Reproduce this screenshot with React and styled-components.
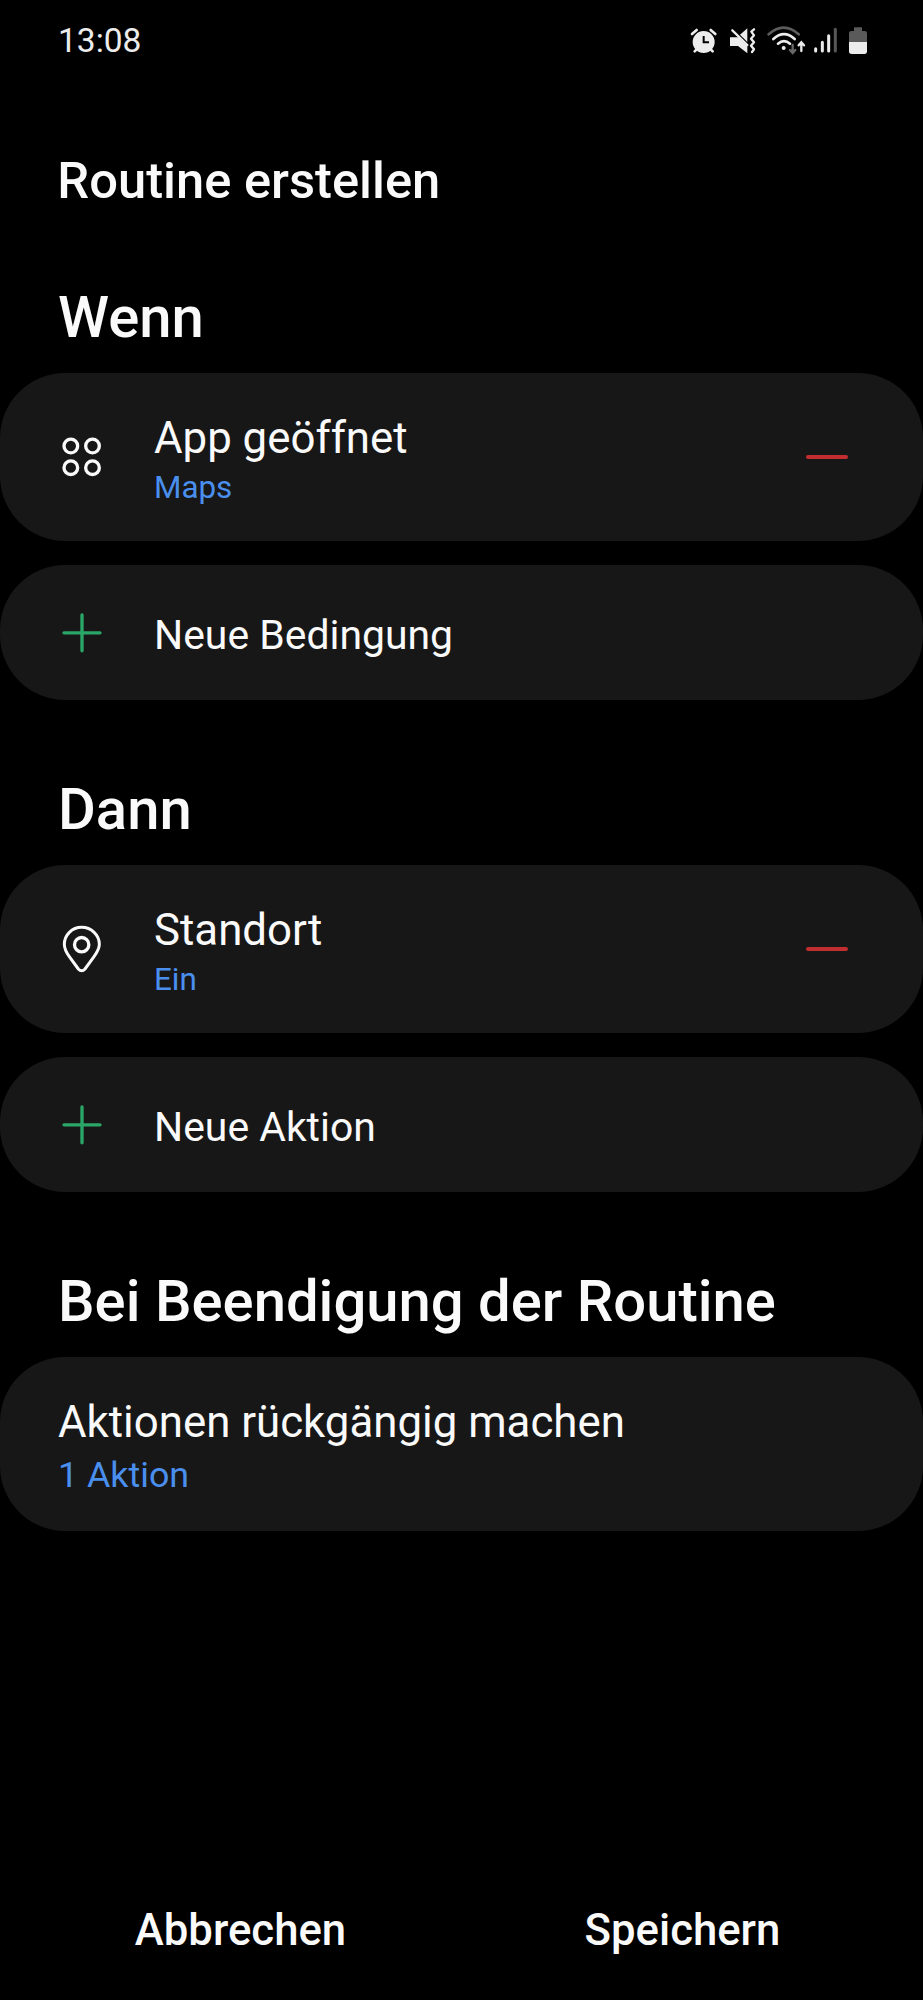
import React from "react";
import styled, { createGlobalStyle } from "styled-components";

const GlobalStyle = createGlobalStyle`
  *, *::before, *::after { box-sizing: border-box; }
  body { margin: 0; background: #000; }
`;

const Screen = styled.main`
  display: flex;
  flex-direction: column;
  width: 923px;
  height: 2000px;
  background: #000;
  color: #fafafa;
  font-family: Roboto, "Liberation Sans", sans-serif;
`;

const StatusBar = styled.header`
  display: flex;
  justify-content: space-between;
  align-items: flex-start;
  height: 80px;
  padding: 21px 54px 0 58px;
`;

const Clock = styled.time`
  font-size: 33.5px;
  line-height: 40px;
  color: #ececec;
`;

const StatusIcons = styled.div`
  display: flex;
  margin-top: 5.3px;
`;

const StatusGap = styled.span`
  width: ${(p) => p.$w}px;
`;

const Title = styled.h1`
  margin: 0;
  padding: 72px 57.3px 0;
  font-size: 50.7px;
  font-weight: 500;
  line-height: 58px;
`;

const Section = styled.section`
  display: flex;
  flex-direction: column;
  gap: 24px;
`;

const SectionTitle = styled.h2`
  margin: 0 0 -24px;
  height: 165px;
  padding: 75px 58px 0;
  font-size: 58px;
  font-weight: 500;
  line-height: 68px;
`;

const FirstSection = styled(Section)`
  margin-top: -2px;
`;

const Card = styled.div`
  display: flex;
  align-items: center;
  height: ${(p) => p.$height}px;
  padding: 0 75px 0 ${(p) => (p.$plain ? 58 : 61)}px;
  border-radius: 65px;
  background: #171717;
`;

const Lead = styled.span`
  display: flex;
  width: 93px;
  flex: none;
`;

const Texts = styled.div`
  display: flex;
  flex-direction: column;
  flex: 1;
  gap: ${(p) => p.$gap}px;
  padding-top: ${(p) => p.$offset}px;
`;

const Label = styled.span`
  font-size: ${(p) => p.$size}px;
  line-height: 52px;
`;

const Value = styled.span`
  font-size: ${(p) => p.$size}px;
  line-height: 42px;
  color: #4a8fee;
`;

const Remove = styled.span`
  width: 42px;
  height: 4px;
  border-radius: 2px;
  background: #c22d30;
`;

const Footer = styled.footer`
  display: grid;
  grid-template-columns: 442px 442px;
  margin-top: auto;
  padding: 0 19px 43px 19.5px;
`;

const FooterButton = styled.button`
  padding: 0;
  border: 0;
  background: none;
  color: inherit;
  font: 500 43.7px/54px Roboto, "Liberation Sans", sans-serif;
`;

const AlarmIcon = () => (
  <svg width="30" height="30" viewBox="57 49 90 90">
    <g stroke="#ececec" strokeWidth="8" strokeLinecap="round">
      <path d="M66 73 80 61M122 61l14 12M74 125l10-10M128 125l-10-10" />
      <circle cx="101" cy="97" r="29" fill="#ececec" />
    </g>
    <path d="M101 79v19h16" fill="none" stroke="#000" strokeWidth="6" />
  </svg>
);

const MuteIcon = () => (
  <svg width="30" height="30" viewBox="174 49 90 90">
    <path d="M210 75 232 56V97Z" fill="#ececec" />
    <path d="M180 83h26l26 25v23l-28-22h-24Z" fill="#ececec" />
    <path d="M187 62 232 106" stroke="#ececec" strokeWidth="7" strokeLinecap="round" />
    <path d="M252 59 244 66 252 77 243 87 252 98 243 108 252 119 246 127" fill="none" stroke="#ececec" strokeWidth="7" strokeLinecap="round" strokeLinejoin="round" />
  </svg>
);

const WifiIcon = () => (
  <svg width="42" height="30" viewBox="287 49 126 90">
    <g fill="none" strokeLinecap="round" strokeWidth="8">
      <path d="M295 74Q340 34 385 74" stroke="#5c5c5c" />
      <path d="M309 88Q341 59 373 88M323 102Q341 87 359 102" stroke="#ececec" />
      <path d="M367 106v23M359 121l8 9 8-9" stroke="#686868" strokeWidth="7" />
      <path d="M393 124v-24M385 107l8-9 8 9" stroke="#ececec" strokeWidth="7" />
    </g>
    <circle cx="340" cy="115" r="6" fill="#ececec" />
  </svg>
);

const SignalIcon = () => (
  <svg width="27" height="30" viewBox="425 49 81 90">
    <g strokeWidth="9" strokeLinecap="round" stroke="#ececec">
      <path d="M436 117v7M456 98v26M475 78v46" />
      <path d="M495 59v65" stroke="#585858" />
    </g>
  </svg>
);

const BatteryIcon = () => (
  <svg width="22" height="30" viewBox="530 49 66 90">
    <path d="M536 97V71q0-7 7-7h8v-9q0-2 2-2h20q2 0 2 2v9h8q7 0 7 7v26Z" fill="#5a5a5a" />
    <path d="M536 97h54v28q0 8-8 8h-38q-8 0-8-8Z" fill="#ececec" />
  </svg>
);

const AppsIcon = () => (
  <svg width="42" height="42" viewBox="183 228 126 126" fill="none" stroke="#fafafa" strokeWidth="10">
    <circle cx="212.5" cy="258" r="20.5" />
    <circle cx="277.5" cy="258" r="20.5" />
    <circle cx="212.5" cy="323" r="20.5" />
    <circle cx="277.5" cy="323" r="20.5" />
  </svg>
);

const PinIcon = () => (
  <svg width="42" height="50" viewBox="183 492 126 150" fill="none" stroke="#fafafa">
    <path d="M245 502C216 502 193 525 193 553C193 567 200 579 208 590L235 627Q245 638 255 627L282 590C290 579 298 567 298 553C298 525 274 502 245 502Z" strokeWidth="9" />
    <circle cx="245" cy="554" r="21.5" strokeWidth="10" />
  </svg>
);

const PlusIcon = () => (
  <svg width="42" height="42" viewBox="183 755 126 126" stroke="#2aa768" strokeWidth="10" strokeLinecap="round">
    <path d="M246 763.5v108M192 817.5h108" />
  </svg>
);

const EntryCard = ({ icon, label, value }) => (
  <Card $height={168}>
    <Lead>{icon}</Lead>
    <Texts $gap={3} $offset={7}>
      <Label $size={43.8}>{label}</Label>
      <Value $size={31.4}>{value}</Value>
    </Texts>
    <Remove />
  </Card>
);

const AddCard = ({ label }) => (
  <Card $height={135}>
    <Lead><PlusIcon /></Lead>
    <Texts $gap={0} $offset={4}>
      <Label $size={40.9}>{label}</Label>
    </Texts>
  </Card>
);

export default function App() {
  return (
    <>
      <GlobalStyle />
      <Screen>
        <StatusBar>
          <Clock>13:08</Clock>
          <StatusIcons>
            <AlarmIcon />
            <StatusGap $w={9} />
            <MuteIcon />
            <StatusGap $w={8} />
            <WifiIcon />
            <StatusGap $w={4} />
            <SignalIcon />
            <StatusGap $w={8} />
            <BatteryIcon />
          </StatusIcons>
        </StatusBar>
        <Title>Routine erstellen</Title>
        <FirstSection>
          <SectionTitle>Wenn</SectionTitle>
          <EntryCard icon={<AppsIcon />} label="App geöffnet" value="Maps" />
          <AddCard label="Neue Bedingung" />
        </FirstSection>
        <Section>
          <SectionTitle>Dann</SectionTitle>
          <EntryCard icon={<PinIcon />} label="Standort" value="Ein" />
          <AddCard label="Neue Aktion" />
        </Section>
        <Section>
          <SectionTitle>Bei Beendigung der Routine</SectionTitle>
          <Card $height={174} $plain>
            <Texts $gap={6} $offset={4}>
              <Label $size={43.8}>Aktionen rückgängig machen</Label>
              <Value $size={35.8}>1 Aktion</Value>
            </Texts>
          </Card>
        </Section>
        <Footer>
          <FooterButton>Abbrechen</FooterButton>
          <FooterButton>Speichern</FooterButton>
        </Footer>
      </Screen>
    </>
  );
}
